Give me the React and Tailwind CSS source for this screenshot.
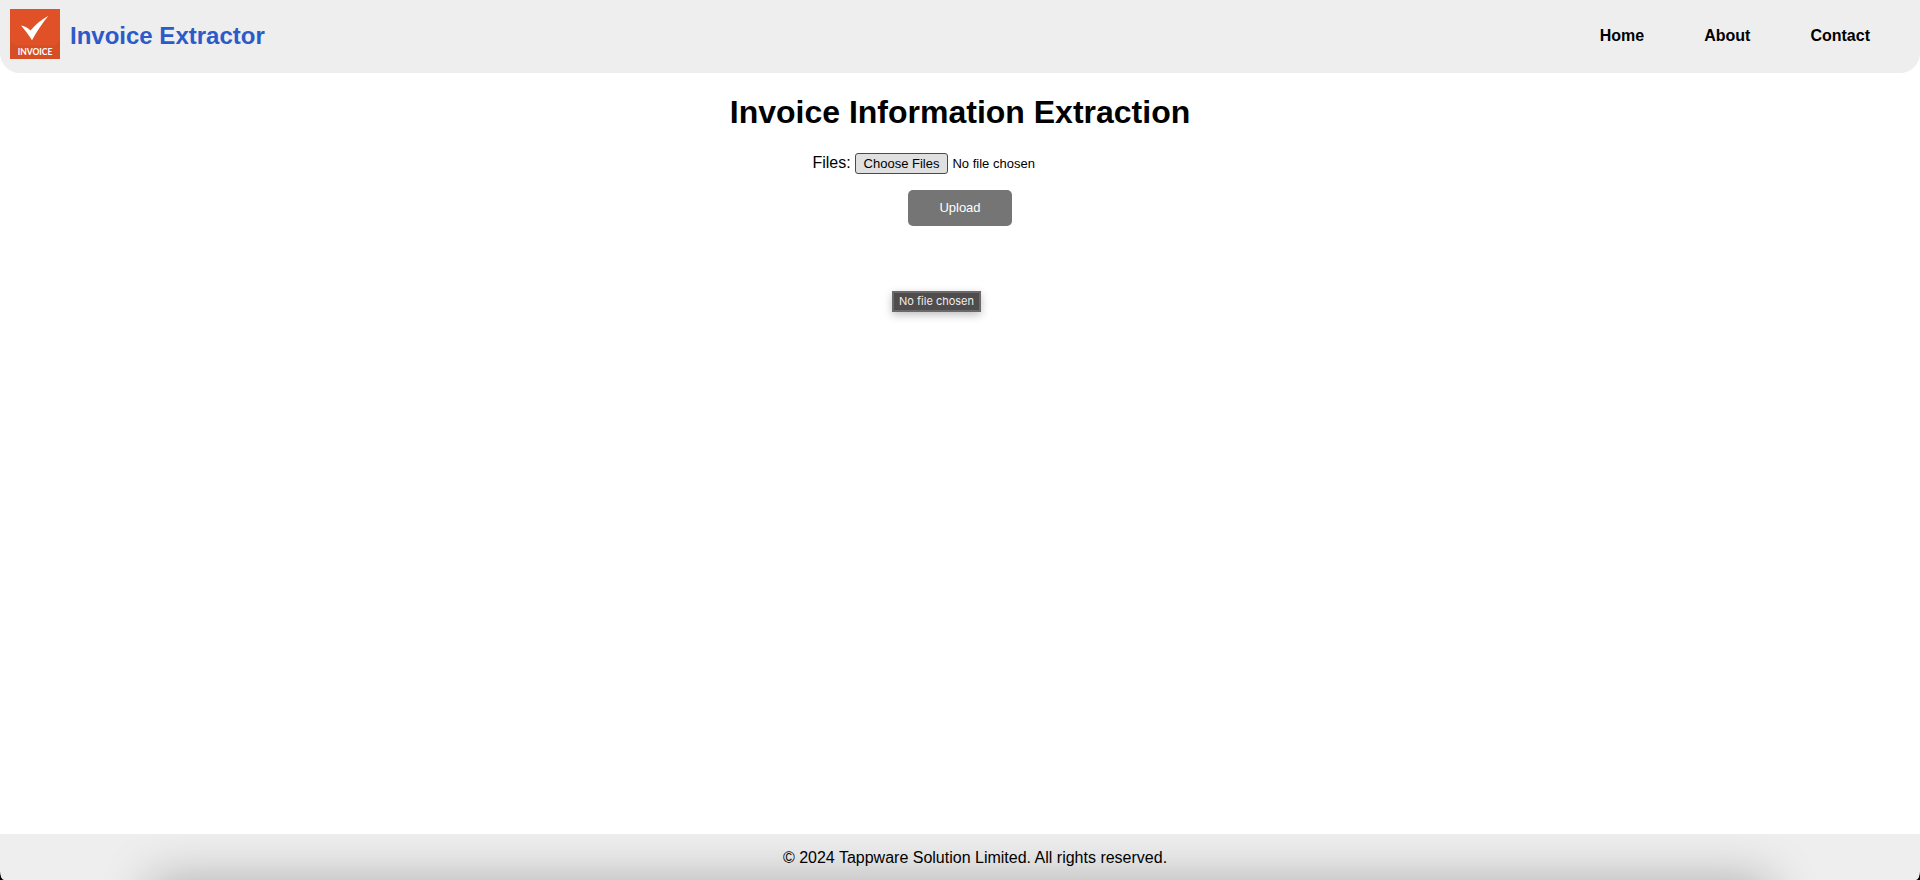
function Logo() {
  return (
    <svg className="size-[50px] shrink-0" viewBox="0 0 50 50" role="img" aria-label="Invoice">
      <rect width="50" height="50" fill="#d64e25" />
      <path d="M0 0H50V28Q50 36.500 41 36.500H9Q0 36.500 0 28Z" fill="#e05127" />
      <path d="M11 16.500C15 17.200 18 19 20.500 21.500C25 16 31 10.500 38.500 6.700C32.500 14 27 22 22 31.200C18.500 26 15 21 11 16.500Z" fill="#fff" />
      <text x="25" y="46.300" textAnchor="middle" fontFamily="Lato, sans-serif" fontWeight="700" fontSize="8.500" fill="#fff">
        INVOICE
      </text>
    </svg>
  );
}

const links = ["Home", "About", "Contact"];

export default function App() {
  return (
    <div className="relative flex min-h-screen flex-col overflow-hidden bg-white font-['Liberation_Sans',Arial,sans-serif] text-base text-black">
      <header className="flex items-start justify-between rounded-b-[20px] bg-[#eeeeee] pt-[9px] pr-[50px] pb-[10px] pl-[10px]">
        <div className="flex items-center gap-[10px]">
          <Logo />
          <span className="pt-[3px] text-2xl font-bold text-[#2c5ac8]">Invoice Extractor</span>
        </div>
        <nav className="flex h-[54px] items-center gap-[60px] font-bold">
          {links.map((link) => (
            <a key={link} href="#">{link}</a>
          ))}
        </nav>
      </header>

      <main className="flex flex-1 flex-col items-center pt-[21px]">
        <h1 className="text-[32px] leading-[37px] font-bold">Invoice Information Extraction</h1>
        <form className="mt-5 flex flex-col items-center gap-[15px]">
          <div className="flex items-baseline gap-1">
            <label htmlFor="files">Files:</label>
            <input
              id="files"
              type="file"
              multiple
              className="w-[253px] text-[13px] leading-[15px] file:h-[21px] file:rounded-[3px] file:border file:border-solid file:border-[#4a4a4a] file:bg-[#e0e0e0] file:px-2"
            />
          </div>
          <button type="button" className="h-[36px] w-[104px] rounded-[5px] bg-[#757575] text-[13px] text-white">
            Upload
          </button>
        </form>
      </main>

      <div role="tooltip" className="absolute top-[291px] left-[892px] flex h-[21px] w-[89px] items-center justify-center border-2 border-[#6b6969] bg-[#4f4c4b] font-['Inter',sans-serif] text-[11px] whitespace-nowrap text-[#eeeeee] shadow-[0_3px_8px_rgba(0,0,0,0.25)]">
        No file chosen
      </div>

      <footer className="bg-black">
        <div className="relative overflow-hidden rounded-b-[4px_9px] bg-[#eeeeee] pt-[15px] pb-[13px] pl-[30px] text-center leading-[18px]">
          <div aria-hidden="true" className="absolute top-full right-[150px] left-[150px] h-[60px] shadow-[0_0_50px_rgba(0,0,0,0.28)]" />
          <p className="relative">© 2024 Tappware Solution Limited. All rights reserved.</p>
        </div>
      </footer>
    </div>
  );
}
